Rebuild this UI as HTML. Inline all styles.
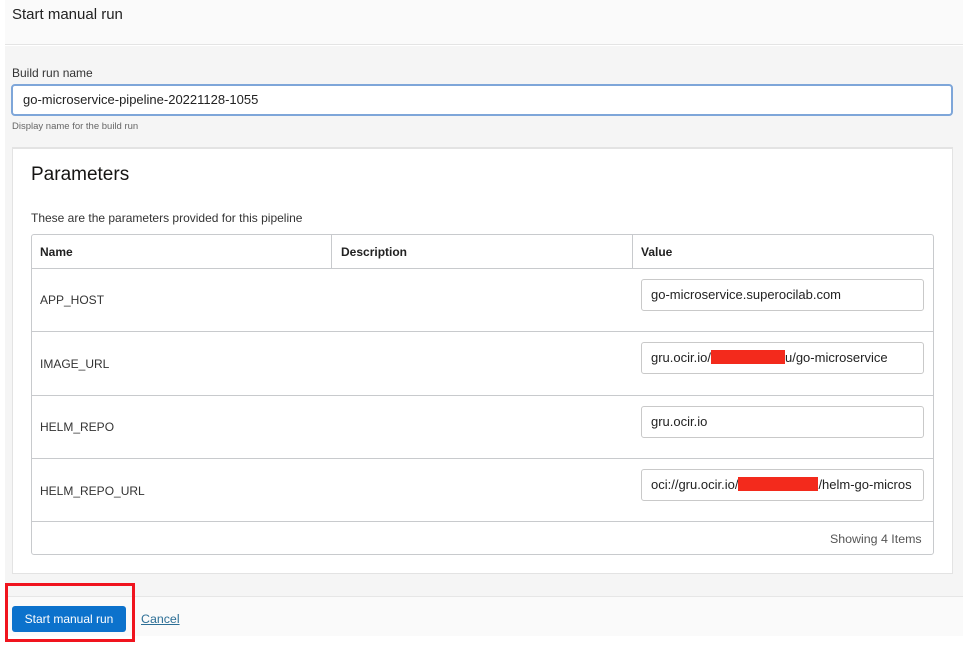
<!DOCTYPE html>
<html><head><style>
*{box-sizing:border-box;margin:0;padding:0}
body{width:965px;height:650px;background:#fff;font-family:"Liberation Sans",Arial,sans-serif;position:relative;overflow:hidden;color:#161513}
.a{position:absolute}
.inp{position:absolute;background:#fff;border:1px solid #c9c9c9;border-radius:3px;font-size:13px;padding-left:9px;line-height:30px;height:32px;color:#222;white-space:nowrap;overflow:hidden}
.red{display:inline-block;background:#f32a1c;height:14px;vertical-align:-2px}
.hl{position:absolute;left:31px;width:903px;height:1px;background:#c8cacd}
.lab{position:absolute;left:40px;font-size:12px;color:#333}
</style></head><body>
<div class="a" style="left:5px;top:0;width:958px;height:45px;background:#fafafa;border-bottom:1px solid #e4e4e4"></div>
<div class="a" style="left:12px;top:6px;font-size:15px;color:#222">Start manual run</div>
<div class="a" style="left:5px;top:46px;width:958px;height:550px;background:#f5f5f5"></div>
<div class="a" style="left:5px;top:596px;width:958px;height:40px;background:#fafafa;border-top:1px solid #e6e6e6"></div>
<div class="a" style="left:12px;top:66px;font-size:12px;color:#333">Build run name</div>
<div class="a" style="left:11px;top:84px;width:942px;height:32px;background:#fff;border:2px solid #7ea6d9;border-radius:4px;font-size:13px;padding-left:10px;line-height:28px;color:#222">go-microservice-pipeline-20221128-1055</div>
<div class="a" style="left:12px;top:121px;font-size:9.5px;color:#666">Display name for the build run</div>
<div class="a" style="left:12px;top:147px;width:941px;height:427px;background:#fff;border:1px solid #e3e3e3;border-top:2px solid #e3e3e3"></div>
<div class="a" style="left:31px;top:164px;font-size:19px;color:#161513">Parameters</div>
<div class="a" style="left:31px;top:211px;font-size:12px;color:#333">These are the parameters provided for this pipeline</div>
<div class="a" style="left:31px;top:234px;width:903px;height:321px;border:1px solid #c8cacd;border-radius:3px"></div>
<div class="a" style="left:331px;top:234px;width:1px;height:34px;background:#c8cacd"></div>
<div class="a" style="left:632px;top:234px;width:1px;height:34px;background:#c8cacd"></div>
<div class="a" style="left:40px;top:245px;font-size:12px;font-weight:bold;color:#222">Name</div>
<div class="a" style="left:341px;top:245px;font-size:12px;font-weight:bold;color:#222">Description</div>
<div class="a" style="left:641px;top:245px;font-size:12px;font-weight:bold;color:#222">Value</div>
<div class="hl" style="top:268px"></div>
<div class="hl" style="top:331px"></div>
<div class="hl" style="top:395px"></div>
<div class="hl" style="top:458px"></div>
<div class="hl" style="top:521px"></div>
<div class="lab" style="top:293px">APP_HOST</div>
<div class="lab" style="top:357px">IMAGE_URL</div>
<div class="lab" style="top:420px">HELM_REPO</div>
<div class="lab" style="top:484px">HELM_REPO_URL</div>
<div class="inp" style="left:641px;top:279px;width:283px">go-microservice.superocilab.com</div>
<div class="inp" style="left:641px;top:342px;width:283px">gru.ocir.io/<span class="red" style="width:74px"></span>u/go-microservice</div>
<div class="inp" style="left:641px;top:406px;width:283px">gru.ocir.io</div>
<div class="inp" style="left:641px;top:469px;width:283px">oci://gru.ocir.io/<span class="red" style="width:80px"></span>/helm-go-micros</div>
<div class="a" style="left:830px;top:532px;font-size:12.4px;color:#555">Showing 4 Items</div>
<div class="a" style="left:5px;top:583px;width:130px;height:59px;border:3px solid #f0141e"></div>
<div class="a" style="left:12px;top:606px;width:114px;height:26px;background:#0c72cc;border-radius:3px;color:#fff;font-size:12px;text-align:center;line-height:26px">Start manual run</div>
<div class="a" style="left:141px;top:612px;font-size:12.4px;color:#2d6f96;text-decoration:underline">Cancel</div>
</body></html>
